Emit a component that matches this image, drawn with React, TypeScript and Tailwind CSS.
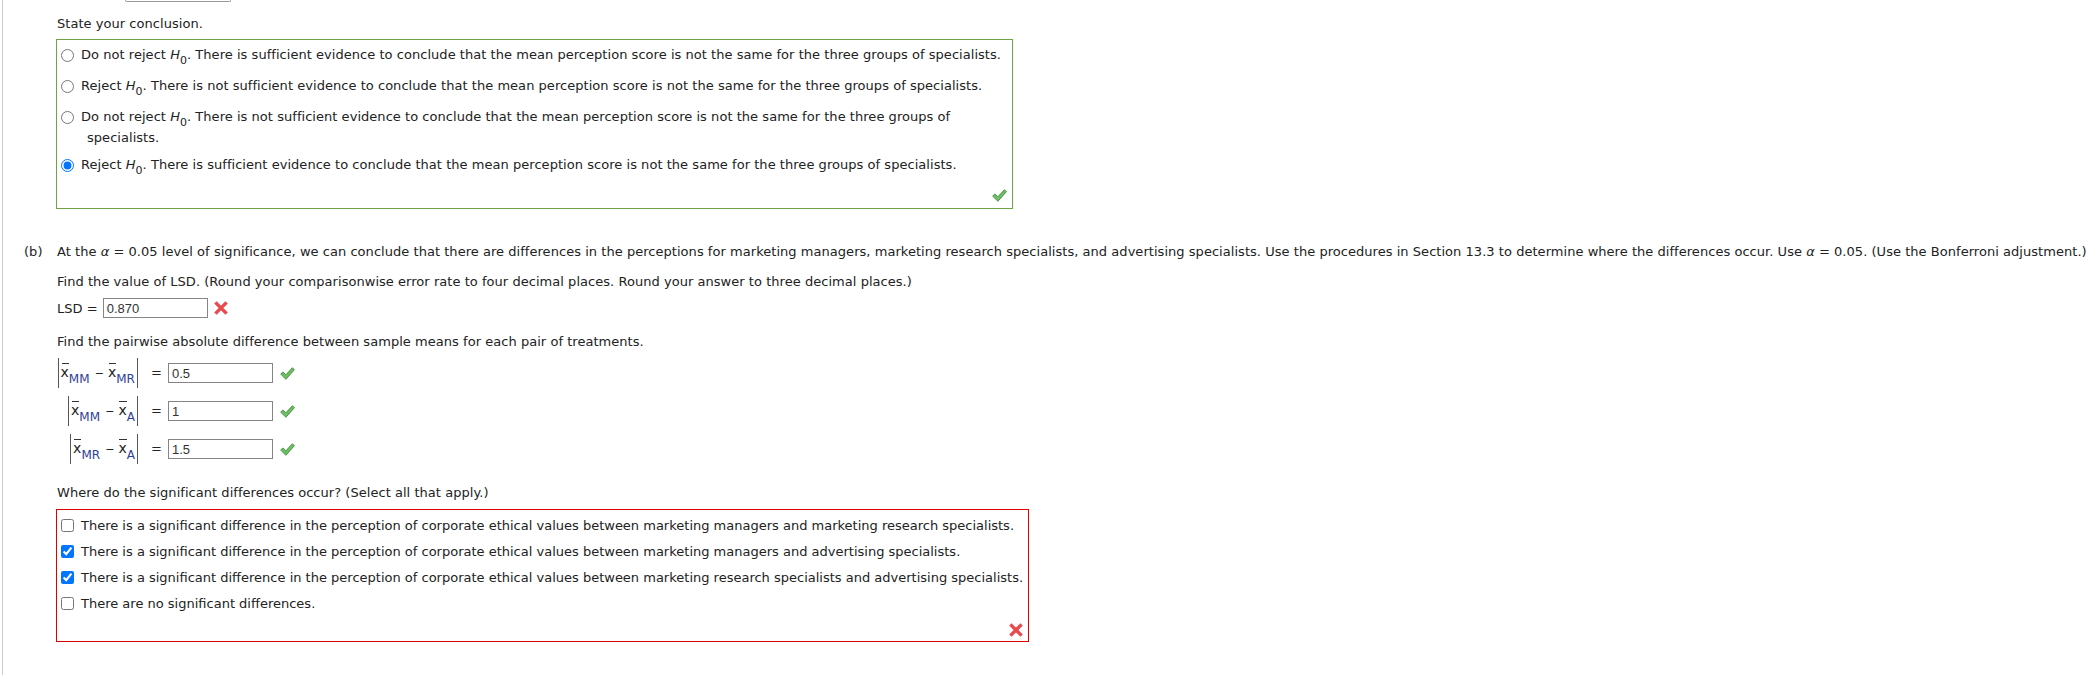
import React from "react";

const Check = () => (
  <svg width="15" height="13" viewBox="0 0 15 13" className="shrink-0 block">
    <path
      d="M0.7 7.1 L2.9 4.9 L5.9 7.8 L12.4 0.7 L14.4 2.7 L5.9 12.3 Z"
      fill="#6cbf62"
      stroke="#3f8d3a"
      strokeWidth="0.9"
      strokeLinejoin="round"
    />
  </svg>
);

const Cross = () => (
  <svg width="14" height="14" viewBox="0 0 14 14" className="shrink-0 block">
    <path d="M2.6 2.6 L11.4 11.4 M11.4 2.6 L2.6 11.4" stroke="#e9484c" strokeWidth="3.4" strokeLinecap="square" />
  </svg>
);

const H0 = () => (
  <>
    <i>H</i>
    <sub className="text-[11px] bottom-[-5px]">0</sub>
  </>
);

const Radio = ({ checked, children }: { checked?: boolean; children: React.ReactNode }) => (
  <div className="flex items-start">
    <div className="h-[24px] flex items-center">
      <input
        type="radio"
        name="concl"
        defaultChecked={checked}
        className="m-0 w-[13px] h-[13px]"
      />
    </div>
    <div className="ml-[7px]">{children}</div>
  </div>
);

const XBar = ({ sub }: { sub: string }) => (
  <span className="whitespace-nowrap">
    <span className="relative inline-block leading-[14px] text-[14px]">
      x
      <span className="absolute left-[1px] right-0 top-[-2px] h-px bg-[#333]" />
    </span>
    <sub className="text-[12px] bottom-[-6px] text-[#30409a]">{sub}</sub>
  </span>
);

const Field = ({ val }: { val: string }) => (
  <div className="w-[105px] h-[20px] border border-[#858585] flex items-center pl-[3px] font-['Liberation_Sans',Arial,sans-serif] text-[13px] text-[#333] leading-none shrink-0 tracking-normal">
    {val}
  </div>
);

const Pair = ({ a, b, val }: { a: string; b: string; val: string }) => (
  <div className="flex items-center h-[30px]">
    <div className="w-[81px] flex justify-end items-center">
      <span className="w-px h-[30px] bg-[#555] shrink-0" />
      <span className="ml-[2px] leading-[30px] whitespace-nowrap">
        <XBar sub={a} />
        <span className="ml-[5px] mr-[4px] text-[11px]">−</span>
        <XBar sub={b} />
      </span>
      <span className="ml-[2px] w-px h-[30px] bg-[#555] shrink-0" />
    </div>
    <span className="ml-[13px]">=</span>
    <div className="ml-[6px]">
      <Field val={val} />
    </div>
    <span className="ml-[7px]">
      <Check />
    </span>
  </div>
);

const CB = ({ checked, text }: { checked?: boolean; text: string }) => (
  <div className="flex items-center h-[26px]">
    <input type="checkbox" defaultChecked={checked} className="m-0 w-[13px] h-[13px]" />
    <span className="ml-[7px] leading-[17px] whitespace-nowrap tracking-normal">{text}</span>
  </div>
);

export default function App() {
  return (
    <div className="w-full h-[675px] bg-white text-[13px] tracking-[0.04px] text-[#222] font-['DejaVu_Sans',Verdana,sans-serif] overflow-hidden">
      <div className="ml-[2px] h-full border-l border-[#cccccc]">
        {/* stub of a box above */}
        <div className="ml-[122px] w-[106px] h-[2px] border border-t-0 border-[#9a9a9a] rounded-b-[2px]" />

        <div className="pl-[21px]">
          {/* Part (a) conclusion */}
          <div className="ml-[32px]">
            <div className="mt-[13px] ml-[1px] leading-[17px]">State your conclusion.</div>
            <div className="mt-[7px] w-[957px] h-[170px] border border-[#6fa347] pt-[3px] pl-[4px] pr-[5px] flex flex-col">
              <div className="flex flex-col gap-[7px]">
                <Radio>
                  <div className="leading-[24px] whitespace-nowrap">
                    Do not reject <H0 />. There is sufficient evidence to conclude that the mean perception score is not the same for the three groups of specialists.
                  </div>
                </Radio>
                <Radio>
                  <div className="leading-[24px] whitespace-nowrap">
                    Reject <H0 />. There is not sufficient evidence to conclude that the mean perception score is not the same for the three groups of specialists.
                  </div>
                </Radio>
                <Radio>
                  <div className="leading-[24px] whitespace-nowrap">
                    Do not reject <H0 />. There is not sufficient evidence to conclude that the mean perception score is not the same for the three groups of
                  </div>
                  <div className="leading-[17px] pl-[6px] whitespace-nowrap">specialists.</div>
                </Radio>
                <Radio checked>
                  <div className="leading-[24px] whitespace-nowrap">
                    Reject <H0 />. There is sufficient evidence to conclude that the mean perception score is not the same for the three groups of specialists.
                  </div>
                </Radio>
              </div>
              <div className="mt-[12px] flex justify-end">
                <Check />
              </div>
            </div>
          </div>

          {/* Part (b) */}
          <div className="mt-[34px] flex">
            <div className="w-[33px] shrink-0 leading-[17px]">(b)</div>
            <div className="flex-1">
              <div className="leading-[17px] whitespace-nowrap">
                At the <i>α</i> = 0.05 level of significance, we can conclude that there are differences in the perceptions for marketing managers, marketing research specialists, and advertising specialists. Use the procedures in Section 13.3 to determine where the differences occur. Use <i>α</i> = 0.05. (Use the Bonferroni adjustment.)
              </div>
              <div className="mt-[13px] leading-[17px]">
                Find the value of LSD. (Round your comparisonwise error rate to four decimal places. Round your answer to three decimal places.)
              </div>
              <div className="mt-[8px] h-[20px] flex items-center">
                <span className="leading-[17px] whitespace-nowrap">LSD =</span>
                <div className="ml-[5px]">
                  <Field val="0.870" />
                </div>
                <span className="ml-[6px]">
                  <Cross />
                </span>
              </div>
              <div className="mt-[15px] leading-[17px]">
                Find the pairwise absolute difference between sample means for each pair of treatments.
              </div>
              <div className="mt-[8px] flex flex-col gap-[8px]">
                <Pair a="MM" b="MR" val="0.5" />
                <Pair a="MM" b="A" val="1" />
                <Pair a="MR" b="A" val="1.5" />
              </div>
              <div className="mt-[20px] leading-[17px]">
                Where do the significant differences occur? (Select all that apply.)
              </div>
              <div className="mt-[8px] -ml-[1px] w-[973px] h-[133px] border border-[#dd0000] pt-[2px] pl-[4px] pr-[5px] flex flex-col">
                <CB text="There is a significant difference in the perception of corporate ethical values between marketing managers and marketing research specialists." />
                <CB checked text="There is a significant difference in the perception of corporate ethical values between marketing managers and advertising specialists." />
                <CB checked text="There is a significant difference in the perception of corporate ethical values between marketing research specialists and advertising specialists." />
                <CB text="There are no significant differences." />
                <div className="mt-[7px] flex justify-end">
                  <Cross />
                </div>
              </div>
            </div>
          </div>
        </div>
      </div>
    </div>
  );
}
